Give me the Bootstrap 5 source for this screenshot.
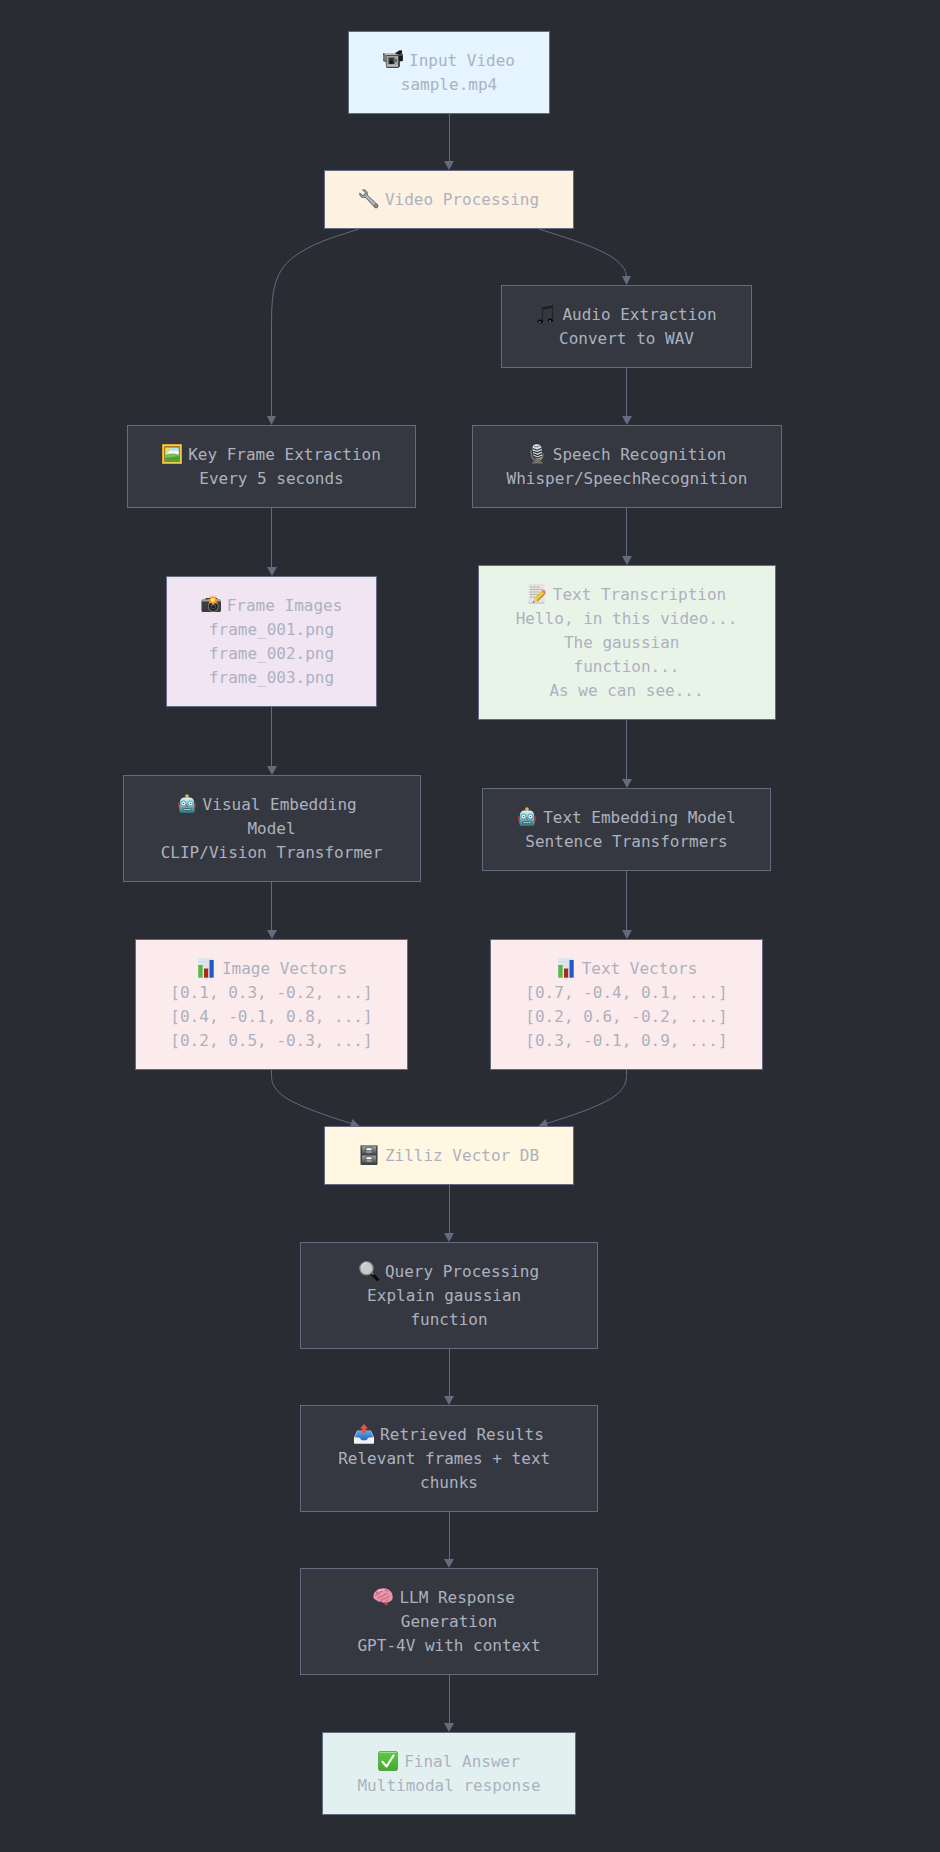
<!DOCTYPE html>
<html lang="en" data-bs-theme="dark">
<head>
<meta charset="utf-8">
<meta name="viewport" content="width=device-width, initial-scale=1">
<title>Multimodal video pipeline</title>
<link rel="stylesheet" href="https://cdn.jsdelivr.net/npm/bootstrap@5.3.0/dist/css/bootstrap.min.css">
<style>
  :root { --edge: #636b80; }
  body {
    background: #2a2c34;
    color: #adb1be;
    font: 16px/24px "DejaVu Sans Mono", monospace;
  }
  .flow { padding: 31px 42px 36px 0; }
  .branches { max-width: 710px; }

  .node {
    max-width: 298px;
    padding: 17px 34px 16px;
    border: 1px solid var(--edge);
    background: #353840;
    white-space: break-spaces;
  }
  .node svg { width: 20px; height: 20px; margin-right: 6px; vertical-align: -4px; }
  .node-wide { max-width: 310px; }
  .node-input { background: #e5f4fe; }
  .node-process { background: #fdf2e2; }
  .node-frames { background: #f1e5f3; }
  .node-text { background: #e9f4e9; }
  .node-vectors { background: #fcebed; }
  .node-db { background: #fff7e2; }
  .node-answer { background: #e2f1f0; }

  /* Straight connector: a line that fills the gap, then an arrowhead */
  .edge { height: 57px; }
  .edge-short { height: 56px; }
  .edge-long { height: 68px; }
  .edge::before { content: ""; flex: 1; width: 1px; background: var(--edge); }
  .edge::after {
    content: "";
    border: solid transparent;
    border-width: 9px 5px 0;
    border-top-color: var(--edge);
  }
  .curve path { fill: none; stroke: var(--edge); stroke-width: 1; }
  .curve polygon { fill: var(--edge); }
</style>
</head>
<body>
<svg width="0" height="0" class="position-absolute" aria-hidden="true">
  <defs>
    <linearGradient id="steel" x1="0" y1="0" x2="0" y2="1"><stop offset="0" stop-color="#a0a3a3"/><stop offset="1" stop-color="#4b4e50"/></linearGradient>
    <linearGradient id="teal" x1="0" y1="0" x2="0" y2="1"><stop offset="0" stop-color="#e2f6f8"/><stop offset=".5" stop-color="#7fb9c3"/><stop offset="1" stop-color="#2f7180"/></linearGradient>
    <linearGradient id="leaf" x1="0" y1="0" x2="0" y2="1"><stop offset="0" stop-color="#5fc94a"/><stop offset="1" stop-color="#46aa2b"/></linearGradient>
    <linearGradient id="tray" x1="0" y1="0" x2="0" y2="1"><stop offset="0" stop-color="#5aa4ea"/><stop offset="1" stop-color="#2b66bd"/></linearGradient>
    <symbol id="robot" viewBox="0 0 20 20">
      <path d="M10 2v3" stroke="#b5563a" stroke-width="1.4"/>
      <circle cx="10" cy="2" r="1.8" fill="#f3b23c"/>
      <rect x="1" y="8.500" width="3" height="5.500" rx="1" fill="#a5333a"/>
      <rect x="16" y="8.500" width="3" height="5.500" rx="1" fill="#a5333a"/>
      <path d="M3 8Q3 4 7 3.500h6Q17 4 17 8v2l.8 6.500Q17.500 19 15 19H5Q2.500 19 2.200 16.500L3 10z" fill="url(#teal)"/>
      <circle cx="6.500" cy="9.500" r="2.500" fill="#d8fbff" stroke="#3a9db0" stroke-width=".9"/>
      <circle cx="13.500" cy="9.500" r="2.500" fill="#d8fbff" stroke="#3a9db0" stroke-width=".9"/>
      <circle cx="6.500" cy="9.500" r=".8" fill="#2d7382"/><circle cx="13.500" cy="9.500" r=".8" fill="#2d7382"/>
      <path d="M10 10l1.300 2.500H8.700z" fill="#e0463c"/>
      <rect x="5.500" y="14" width="9" height="3" rx="1.500" fill="#265764"/>
      <path d="M6.500 15.500h7" stroke="#e6f4f4" stroke-width="1.300" stroke-dasharray="1.200 .7"/>
    </symbol>
    <symbol id="chart" viewBox="0 0 20 20">
      <rect x="2" y="0" width="16" height="20" fill="#dfe8ef"/>
      <path d="M2 4h16M2 8h16M2 12h16M2 16h16" stroke="#c8d6df" stroke-width=".6"/>
      <rect x="2.300" y="7" width="4.300" height="12.700" fill="#54b83a"/>
      <rect x="8" y="10.500" width="4.200" height="9.200" fill="#b0261c"/>
      <rect x="13.500" y="2" width="4.200" height="17.700" fill="#2558c4"/>
    </symbol>
  </defs>
</svg>

<main class="flow d-flex flex-column align-items-center text-center">
  <div class="node node-input"><span class="d-block"><svg viewBox="0 0 20 20" aria-hidden="true"><path d="M1 3h11l5-3 1.500.5-.5 3 2 .5v7l-3 .500v5L15 18H4l-1-1-.300-5L0 11V3.500z" fill="#4a4a4a"/><path d="M1 3h13l2 2H2z" fill="#b9bab9"/><path d="M3.500 6H15v10.500H3.500z" fill="#a3a4a3"/><path d="M0 5h3.500v5.500H0z" fill="#77797a"/><rect x="5.500" y="7.500" width="6" height="6.500" fill="#343536"/><circle cx="8.300" cy="12" r="1.800" fill="#131414"/><rect x="10.500" y="9" width="3.500" height="3" fill="#66696a"/><path d="M12 4l4-3 3-.5v3l-3 1zM16 6h3.500v5H16z" fill="#171818"/><path d="M4 16h11" stroke="#dadada" stroke-width=".8"/></svg>Input Video</span><span class="d-block">sample.mp4</span></div>
  <div class="edge edge-short d-flex flex-column align-items-center"></div>
  <div class="node node-process"><span class="d-block"><svg viewBox="0 0 20 20" aria-hidden="true"><path d="M3.500.8C6 .2 8.300 2 8.400 4.600l.1 1.700 9.800 9.300c1.800 1.900-.7 4.400-2.600 2.700L6.500 8.500l-2 .1C1.800 8.500.3 6.300.7 4l3 2.300 2.100-.5.4-2.200z" fill="#9aa5ab" stroke="#55585a" stroke-width=".8"/><path d="M7.500 7l9.500 9.500" stroke="#d3d9dc" stroke-width="1"/><circle cx="17" cy="17" r="1.900" fill="#6b5b51"/><circle cx="17" cy="17" r=".8" fill="#eee2d3"/></svg>Video Processing</span></div>

  <div class="branches row g-0 w-100">
    <div class="col-6 d-flex flex-column align-items-center">
      <svg class="curve d-block" width="355" height="196" viewBox="0 0 355 196" aria-hidden="true"><path d="M265 0L250.400 4.700C235.800 9.300 206.700 18.700 192.100 34.800C177.500 51 177.500 74 177.500 102V188"/><polygon points="173,187 182,187 177.500,196"/></svg>
      <div class="node"><span class="d-block"><svg viewBox="0 0 20 20" aria-hidden="true"><rect width="20" height="20" fill="#cfa02a"/><rect x=".8" y=".8" width="18.400" height="18.400" fill="#f0cf4e"/><rect x="2.200" y="2.200" width="15.600" height="15.600" fill="#8e6415"/><rect x="3.200" y="3.500" width="13.600" height="13.300" fill="#b9e0f0"/><circle cx="5.500" cy="5.800" r="2" fill="#f6d93c"/><path d="M7 7.500q2-2 4 0 3-2 5.800 0V10H5z" fill="#f4fafb"/><path d="M3.200 11q6-2.500 13.600-.5v6.300H3.200z" fill="#79c04a"/><path d="M3.200 14q7-.5 13.600-2v4.800H3.200z" fill="#4d9c34"/></svg>Key Frame Extraction</span><span class="d-block">Every 5 seconds</span></div>
      <div class="edge edge-long d-flex flex-column align-items-center"></div>
      <div class="node node-frames"><span class="d-block"><svg viewBox="0 0 20 20" aria-hidden="true"><path d="M.5 6Q.5 4.500 2 4.500h2l1-1.500h11l1 1.500h1.500q1.500 0 1.500 1.500v9.500q0 1.500-1.500 1.500H2Q.5 17 .5 15.500z" fill="#3b3c3e"/><path d="M.5 6.500h19.500v-1.500l-3-.5H2z" fill="#a1a3a4"/><circle cx="12.300" cy="11.500" r="5.300" fill="#8b8e90"/><circle cx="12.300" cy="11.500" r="4.500" fill="#1e1f21"/><circle cx="12.300" cy="11.500" r="2.800" fill="#4b5054"/><circle cx="12.300" cy="11.800" r="1.500" fill="#17191b"/><path d="M11.500 0l1.300 2.200L15.500 1l-.5 2.800 2.500.7-2 1.700 1 2.500-2.800-.5L12 10.500 10.500 8l-3 .7 1-2.500L6.500 4.500 9 4l-.5-3 2.300 1.300z" fill="#f39b23"/><circle cx="11.800" cy="5" r="2.100" fill="#ffe98a"/></svg>Frame Images</span><span class="d-block">frame_001.png</span><span class="d-block">frame_002.png</span><span class="d-block">frame_003.png</span></div>
      <div class="edge edge-long d-flex flex-column align-items-center"></div>
      <div class="node"><span class="d-block"><svg aria-hidden="true"><use href="#robot"/></svg>Visual Embedding Model</span><span class="d-block">CLIP/Vision Transformer</span></div>
      <div class="edge d-flex flex-column align-items-center"></div>
      <div class="node node-vectors"><span class="d-block"><svg aria-hidden="true"><use href="#chart"/></svg>Image Vectors</span><span class="d-block">[0.1, 0.3, -0.2, ...]</span><span class="d-block">[0.4, -0.1, 0.8, ...]</span><span class="d-block">[0.2, 0.5, -0.3, ...]</span></div>
      <svg class="curve d-block" width="355" height="56" viewBox="0 0 355 56" aria-hidden="true"><path d="M177.500 0V4.700C177.500 9.300 177.500 18.700 192.100 28C206.700 37.300 235.800 46.700 250.400 51.300L258 53.700"/><polygon points="265.500,56 258.400,49 255.600,57.600"/></svg>
    </div>

    <div class="col-6 d-flex flex-column align-items-center">
      <svg class="curve d-block" width="355" height="56" viewBox="0 0 355 56" aria-hidden="true"><path d="M90 0L104.600 4.700C119.200 9.300 148.300 18.700 162.900 28C171 33.500 177.500 40 177.500 48"/><polygon points="173,47 182,47 177.500,56"/></svg>
      <div class="node"><span class="d-block"><svg viewBox="0 0 20 20" aria-hidden="true"><path d="M6.500 3L16.500.7v15.500" fill="none" stroke="#22242a" stroke-width="1.200"/><path d="M6.500 2.500v14.500" stroke="#22242a" stroke-width="1.200"/><path d="M6 2.300L17 0v3.700L6 6z" fill="#241e20"/><path d="M6.500 2.300L17 .1" stroke="#6d6261" stroke-width=".6"/><ellipse cx="4.200" cy="17.500" rx="2.700" ry="1.900" fill="#08090b"/><ellipse cx="14.400" cy="16.300" rx="2.700" ry="1.900" fill="#08090b"/><ellipse cx="3.700" cy="18" rx="1.200" ry=".5" fill="#aeb0b4"/><ellipse cx="14" cy="16.900" rx="1.200" ry=".5" fill="#aeb0b4"/></svg>Audio Extraction</span><span class="d-block">Convert to WAV</span></div>
      <div class="edge d-flex flex-column align-items-center"></div>
      <div class="node node-wide"><span class="d-block"><svg viewBox="0 0 20 20" aria-hidden="true"><path d="M4 6q0 9 4 10.500h5q3-2 3-7" fill="none" stroke="#85806f" stroke-width="1.300"/><path d="M8.500 15h3.500v2.500H15l1 2H5l1-2h2.500z" fill="#77746a"/><path d="M5.500 4Q5.500 .3 9.500.2q4.500-.2 5 3.800l.6 7q0 4-3.600 4-4.500 0-5-4z" fill="#d8e3e8"/><path d="M6 4.500l4 1.700 4.500-2M6.200 7.200l4 1.700 4.500-2M6.500 9.900l4 1.700 4.500-2M7 12.500l3.700 1.500 4-1.800" fill="none" stroke="#22282e" stroke-width="1.200"/><path d="M7 2.500q3 1 6-.5" fill="none" stroke="#52616b" stroke-width=".8"/></svg>Speech Recognition</span><span class="d-block">Whisper/SpeechRecognition</span></div>
      <div class="edge d-flex flex-column align-items-center"></div>
      <div class="node node-text"><span class="d-block"><svg viewBox="0 0 20 20" aria-hidden="true"><path d="M1.500 0h16v19.500h-16z" fill="#e4e3e2"/><path d="M1.500 18.500h16v1h-16z" fill="#bdbbb9"/><path d="M3 3h10M3 5.500h12M3 8h10M3 10.500h9M3 13h5" stroke="#a5a5a7" stroke-width=".9" stroke-dasharray="2.500 .7"/><path d="M6 18.500l1.500-4.500 8-7.800 3 3-8.300 8z" fill="#efb92c"/><path d="M8.500 15.500l8-7.800" stroke="#fadb63" stroke-width="1"/><path d="M14.500 7l1.800-1.600q2.300.6 2.700 3l-1.600 1.600z" fill="#df8382"/><path d="M7.500 14L6 18.500l4.200-1.300z" fill="#ead0a6"/><path d="M6.500 17L6 18.500l1.500-.5z" fill="#222"/><path d="M10.200 17.200l7.800-7.500" stroke="#7c5820" stroke-width=".9"/></svg>Text Transcription</span><span class="d-block">Hello, in this video...</span><span class="d-block">The gaussian function...</span><span class="d-block">As we can see...</span></div>
      <div class="edge edge-long d-flex flex-column align-items-center"></div>
      <div class="node"><span class="d-block"><svg aria-hidden="true"><use href="#robot"/></svg>Text Embedding Model</span><span class="d-block">Sentence Transformers</span></div>
      <div class="edge edge-long d-flex flex-column align-items-center"></div>
      <div class="node node-vectors"><span class="d-block"><svg aria-hidden="true"><use href="#chart"/></svg>Text Vectors</span><span class="d-block">[0.7, -0.4, 0.1, ...]</span><span class="d-block">[0.2, 0.6, -0.2, ...]</span><span class="d-block">[0.3, -0.1, 0.9, ...]</span></div>
      <svg class="curve d-block" width="355" height="56" viewBox="0 0 355 56" aria-hidden="true"><path d="M177.500 0V4.700C177.500 9.300 177.500 18.700 162.900 28C148.300 37.300 119.200 46.700 104.600 51.300L97 53.700"/><polygon points="89.500,56 96.600,49 99.400,57.600"/></svg>
    </div>
  </div>

  <div class="node node-db"><span class="d-block"><svg viewBox="0 0 20 20" aria-hidden="true"><rect x="1.500" y="0" width="17" height="20" rx=".8" fill="#3f4446"/><rect x="1.500" y="0" width="17" height="1.500" fill="#8b9092"/><rect x="3" y="1.500" width="14" height="7.500" fill="url(#steel)"/><rect x="3" y="10.500" width="14" height="7.500" fill="url(#steel)"/><path d="M7 2.700h6v3H7zM7 11.700h6v3H7z" fill="#fbfbf8" stroke="#4c5052" stroke-width=".8"/><path d="M7.500 7h5M7.500 16h5" stroke="#c9cccd" stroke-width="1.100"/></svg>Zilliz Vector DB</span></div>
  <div class="edge d-flex flex-column align-items-center"></div>
  <div class="node"><span class="d-block"><svg viewBox="0 0 20 20" aria-hidden="true"><path d="M12 12l6.500 6.500" stroke="#0b0b0c" stroke-width="3" stroke-linecap="round"/><path d="M12.500 11.500l2 2" stroke="#8d9093" stroke-width="1.300"/><circle cx="7.500" cy="7.300" r="6.600" fill="#c9cbca" stroke="#868b8d" stroke-width="1.200"/><path d="M2.500 6.500A5.200 5.200 0 0 1 8 2" fill="none" stroke="#e7e9e8" stroke-width="1"/></svg>Query Processing</span><span class="d-block">Explain gaussian function</span></div>
  <div class="edge edge-short d-flex flex-column align-items-center"></div>
  <div class="node"><span class="d-block"><svg viewBox="0 0 20 20" aria-hidden="true"><path d="M3 6.500h14l3 7v5.500H0v-5.500z" fill="#b7c6d8"/><path d="M3.500 7h13l2.500 6.500-5 .5q-1 2.500-4 2.500T6 14l-5-.5z" fill="url(#tray)"/><path d="M0 13.300l5.500.4q1 2.900 4.500 2.900t4.500-2.900l5.500-.4V19q0 .8-.8.8H.8Q0 19.800 0 19z" fill="#f2f2f0"/><path d="M10 0l4 4.500h-2.200V9H8.200V4.500H6z" fill="#e4574b"/></svg>Retrieved Results</span><span class="d-block">Relevant frames + text chunks</span></div>
  <div class="edge edge-short d-flex flex-column align-items-center"></div>
  <div class="node"><span class="d-block"><svg viewBox="0 0 20 20" aria-hidden="true"><path d="M11 14q4 0 4 4l-2 .5q-1.500-2-4.500-3.500z" fill="#a34658"/><path d="M.3 10Q0 6 3 4q2-3 6-2.500 4-1 7 1.500 3.500 2 3.500 6 1 4-2.500 5.500-2.500 1.500-4.500.7-2.500 1-4.500-.7-3 .8-4.500-1.200Q.5 12.500.3 10z" fill="#e994a8"/><path d="M2.500 9q1-2.500 3.500-2.300 1-2.700 3.500-2.200M5 12q.5-2.500 3-2.500t3.500-2q2 .500 3-1.500M8 14q0-2 2.500-2.200 2.500.300 3.500-1.800 2 .300 3-1.500M12 3.500q2-.5 3 1M3 5.500q1.500-.5 2 .5M13 14.500q.5-1.500 2.500-1.700" fill="none" stroke="#b95873" stroke-width=".9"/><path d="M5 4q3-2 6-1" fill="none" stroke="#f8c4cf" stroke-width=".9"/></svg>LLM Response Generation</span><span class="d-block">GPT-4V with context</span></div>
  <div class="edge d-flex flex-column align-items-center"></div>
  <div class="node node-answer"><span class="d-block"><svg viewBox="0 0 20 20" aria-hidden="true"><rect x=".3" y=".3" width="19.400" height="19.400" rx="2.500" fill="url(#leaf)" stroke="#3c9130" stroke-width=".6"/><path d="M2 1.500h16" stroke="#9be088" stroke-width="1.200" stroke-linecap="round"/><path d="M4.500 10.800l4 4.700L15.500 4.500" fill="none" stroke="#fff" stroke-width="2.100" stroke-linecap="round" stroke-linejoin="round"/></svg>Final Answer</span><span class="d-block">Multimodal response</span></div>
</main>
<script src="https://cdn.jsdelivr.net/npm/bootstrap@5.3.0/dist/js/bootstrap.bundle.min.js"></script>
</body>
</html>
